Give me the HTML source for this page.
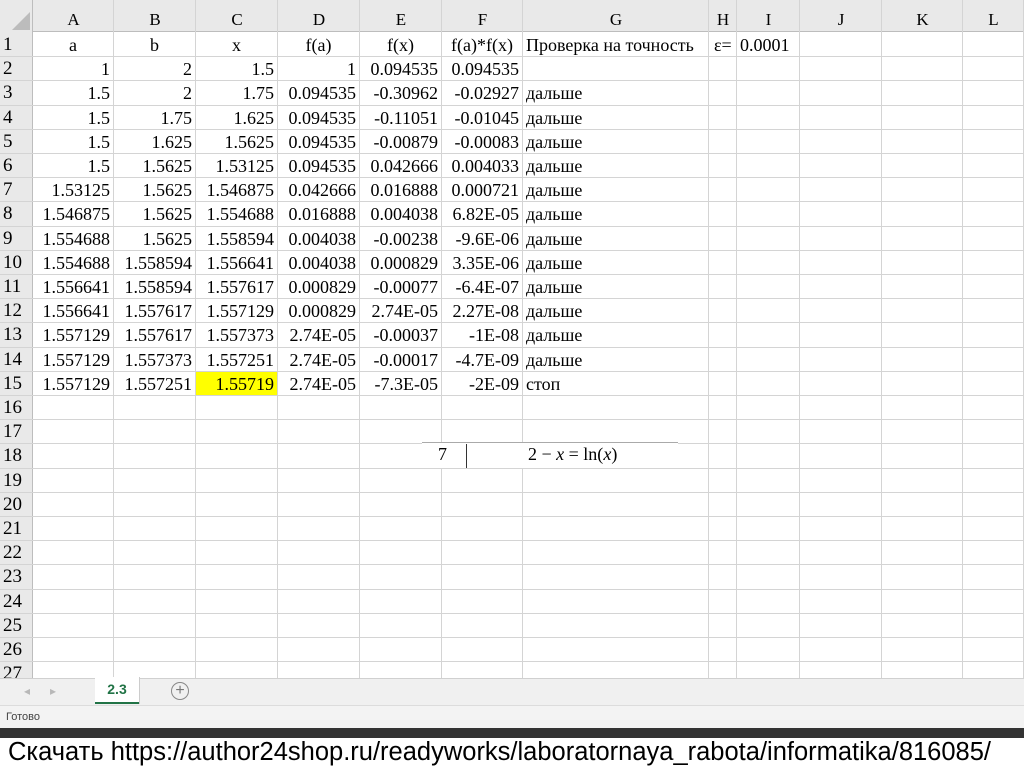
<!DOCTYPE html>
<html><head><meta charset="utf-8"><style>
body{margin:0;width:1024px;height:767px;overflow:hidden;background:#fff;position:relative;font-family:"Liberation Serif",serif;}
.grid{position:absolute;left:0;top:0;width:1024px;height:678px;overflow:hidden;}
.hdr{position:absolute;top:0;height:32px;background:#e9e9e9;left:0;width:1024px;border-bottom:1px solid #bdbdbd;box-sizing:border-box}
.c{position:absolute;box-sizing:border-box;font-size:18px;line-height:24px;white-space:nowrap;padding:0 3px;color:#000}
.r{text-align:right}.m{text-align:center}
.vl{position:absolute;top:0;width:1px;height:678px;background:#d4d4d4}
.hl{position:absolute;left:0;height:1px;width:1024px;background:#d4d4d4}
</style></head><body>
<div class="grid" id="g">
<div class="hdr"></div>
<div style="position:absolute;left:0;top:0;width:33px;height:678px;background:#e9e9e9;border-right:1px solid #bdbdbd;box-sizing:border-box"></div>
<svg style="position:absolute;left:12px;top:12px" width="18" height="18"><polygon points="18,0 18,18 0,18" fill="#bcbcbc"/></svg>
</div>
<div style="position:absolute;left:0;top:678px;width:1024px;height:27px;background:#f0f0f0;border-top:1px solid #d0d0d0;box-sizing:border-box"></div>
<div style="position:absolute;left:24px;top:684px;color:#b8b8b8;font:12px 'Liberation Sans',sans-serif">◂</div>
<div style="position:absolute;left:50px;top:684px;color:#b8b8b8;font:12px 'Liberation Sans',sans-serif">▸</div>
<div style="position:absolute;left:95px;top:677px;width:44px;height:25px;background:#fff;border-bottom:2px solid #217346;box-shadow:1px 0 0 #ccc;font:bold 14px 'Liberation Sans',sans-serif;color:#217346;text-align:center;line-height:24px">2.3</div>
<div style="position:absolute;left:171px;top:682px;width:16px;height:16px;border:1px solid #888;border-radius:50%;color:#777;font:16px/16px 'Liberation Sans',sans-serif;text-align:center">+</div>
<div style="position:absolute;left:0;top:705px;width:1024px;height:23px;background:#f3f3f3;border-top:1px solid #dcdcdc;box-sizing:border-box;font:11px/22px 'Liberation Sans',sans-serif;color:#444;padding-left:6px">Готово</div>
<div style="position:absolute;left:0;top:728px;width:1024px;height:10px;background:#333"></div>
<div style="position:absolute;left:8px;top:737px;font:25.5px/30px 'Liberation Sans',sans-serif;color:#000;white-space:nowrap">Скачать https://author24shop.ru/readyworks/laboratornaya_rabota/informatika/816085/</div>
<div style="position:absolute;left:422px;top:442px;width:256px;height:26px;background:#fff;border-top:1px solid #aaa;box-sizing:border-box"></div>
<div style="position:absolute;left:466px;top:444px;width:1px;height:24px;background:#333"></div>
<div style="position:absolute;left:438px;top:444px;font:18px 'Liberation Serif',serif">7</div>
<div style="position:absolute;left:528px;top:444px;font:18px 'Liberation Serif',serif">2 − <i>x</i> = ln(<i>x</i>)</div>
<script>
var xs=[33,114,196,278,360,442,523,709,737,800,882,963,1024];
var L=["A","B","C","D","E","F","G","H","I","J","K","L"];
var g=document.getElementById('g'),h='';
for(var i=0;i<12;i++){h+='<div class="vl" style="left:'+(xs[i+1]-1)+'px"></div>';
h+='<div class="c m" style="left:'+xs[i]+'px;width:'+(xs[i+1]-xs[i])+'px;top:8px;font-size:17px">'+L[i]+'</div>';}
var rt=function(n){return 33+(n-1)*24.2;};
for(var n=1;n<=27;n++){var t=rt(n);h+='<div class="hl" style="top:'+Math.round(t+23.2)+'px"></div>';
h+='<div class="c" style="left:0;width:33px;top:'+Math.round(t)+'px;font-size:19px">'+n+'</div>';}
var d=[
["a","b","x","f(a)","f(x)","f(a)*f(x)","Проверка на точность"],
["1","2","1.5","1","0.094535","0.094535",""],
["1.5","2","1.75","0.094535","-0.30962","-0.02927","дальше"],
["1.5","1.75","1.625","0.094535","-0.11051","-0.01045","дальше"],
["1.5","1.625","1.5625","0.094535","-0.00879","-0.00083","дальше"],
["1.5","1.5625","1.53125","0.094535","0.042666","0.004033","дальше"],
["1.53125","1.5625","1.546875","0.042666","0.016888","0.000721","дальше"],
["1.546875","1.5625","1.554688","0.016888","0.004038","6.82E-05","дальше"],
["1.554688","1.5625","1.558594","0.004038","-0.00238","-9.6E-06","дальше"],
["1.554688","1.558594","1.556641","0.004038","0.000829","3.35E-06","дальше"],
["1.556641","1.558594","1.557617","0.000829","-0.00077","-6.4E-07","дальше"],
["1.556641","1.557617","1.557129","0.000829","2.74E-05","2.27E-08","дальше"],
["1.557129","1.557617","1.557373","2.74E-05","-0.00037","-1E-08","дальше"],
["1.557129","1.557373","1.557251","2.74E-05","-0.00017","-4.7E-09","дальше"],
["1.557129","1.557251","1.55719","2.74E-05","-7.3E-05","-2E-09","стоп"]];
for(var r=0;r<d.length;r++){var t=Math.round(rt(r+1));
for(var c=0;c<7;c++){var cls=(r==0&&c<6)?'c m':(c==6?'c':'c r');
var bg=(r==14&&c==2)?'background:#ffff00;':'';
h+='<div class="'+cls+'" style="'+bg+'left:'+xs[c]+'px;width:'+(xs[c+1]-xs[c]-1)+'px;top:'+t+'px;height:23px">'+d[r][c]+'</div>';}}
h+='<div class="c" style="left:711px;top:33px">ε=</div><div class="c" style="left:737px;top:33px">0.0001</div>';
g.insertAdjacentHTML('beforeend',h);
</script>
</body></html>
